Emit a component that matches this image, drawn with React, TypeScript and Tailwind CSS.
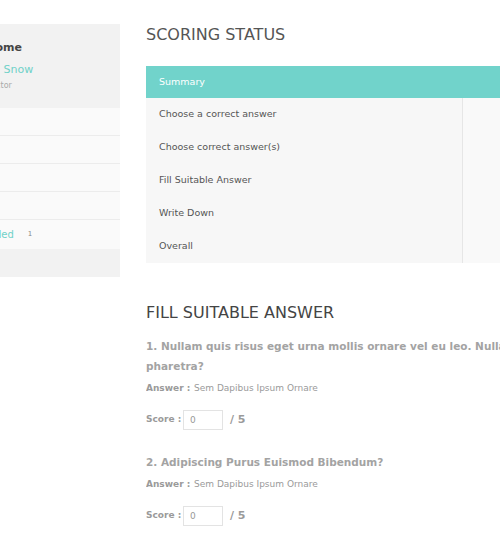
import React from "react";

const FONT = { fontFamily: '"DejaVu Sans", "Liberation Sans", sans-serif' };

const sideRows = ["", "", "", ""];

const summaryRows = [
  "Choose a correct answer",
  "Choose correct answer(s)",
  "Fill Suitable Answer",
  "Write Down",
  "Overall",
];

interface QuestionProps {
  number: number;
  text: string;
  answer: string;
  max: number;
}

function Question({ number, text, answer, max }: QuestionProps) {
  return (
    <div className="mb-[22px]">
      <p className="text-[10.5px] font-bold leading-[20px] text-[#a3a3a3]">{`${number}. ${text}`}</p>
      <div className="mt-[6px] flex items-center text-[9px] leading-[12px] text-[#9a9a9a]">
        <span className="font-bold w-[48px]">Answer :</span>
        <span>{answer}</span>
      </div>
      <div className="mt-[16px] flex items-center text-[9px] text-[#9a9a9a]">
        <span className="font-bold w-[37px]">Score :</span>
        <input
          defaultValue="0"
          className="w-[40px] h-[20px] border border-[#e3e3e3] bg-white px-[6px] text-[9px] text-[#999] outline-none"
        />
        <span className="ml-[7px] text-[11px] font-bold">{`/ ${max}`}</span>
      </div>
    </div>
  );
}

export default function App() {
  return (
    <div className="flex w-[500px] h-[550px] overflow-hidden bg-white pt-6" style={FONT}>
      <aside className="w-[120px] shrink-0 self-start overflow-hidden bg-[#f2f2f2]">
        <div className="ml-[-34px] w-[154px]">
          <div className="h-[84px] pt-[17px]">
            <p className="text-[11px] font-bold text-[#444] leading-[14px]">Welcome</p>
            <p className="mt-[8px] pl-[17px] text-[11px] text-[#6fd1c8] leading-[14px] whitespace-nowrap">Jon Snow</p>
            <p className="mt-[3px] pl-[7px] text-[8px] text-[#aaa] leading-[12px]">Instructor</p>
          </div>
          {sideRows.map((_, i) => (
            <div key={i} className="h-[28px] border-b border-[#ececec] bg-[#fafafa]" />
          ))}
          <div className="flex h-[29px] items-center bg-[#fafafa] pl-[11px] text-[10px]">
            <span className="text-[#6fd1c8]">Graded</span>
            <span className="ml-[14px] text-[7px] text-[#888]">1</span>
          </div>
          <div className="h-[28px]" />
        </div>
      </aside>

      <main className="ml-[26px] min-w-0 flex-1 overflow-hidden">
        <h2 className="mt-[3px] text-[16px] leading-[16px] text-[#555] whitespace-nowrap">
          SCORING STATUS
        </h2>
        <div className="mt-[23px] w-[420px]">
          <div className="flex h-[32px] items-center bg-[#71d3cb] pl-[13px] text-[9.5px] text-white">
            Summary
          </div>
          <div className="flex bg-[#f7f7f7]">
            <div className="w-[317px] border-r border-[#e6e6e6]">
              {summaryRows.map((r) => (
                <div key={r} className="flex h-[33px] items-center pl-[13px] text-[9.5px] text-[#555]">
                  {r}
                </div>
              ))}
            </div>
            <div className="flex-1 bg-[#f9f9f9]" />
          </div>
        </div>

        <h2 className="mt-[42px] text-[16px] leading-[16px] text-[#444] whitespace-nowrap">
          FILL SUITABLE ANSWER
        </h2>
        <div className="mt-[15px] w-[480px]">
          <Question
            number={1}
            text="Nullam quis risus eget urna mollis ornare vel eu leo. Nulla vitae elit libero, a pharetra?"
            answer="Sem Dapibus Ipsum Ornare"
            max={5}
          />
          <Question number={2} text="Adipiscing Purus Euismod Bibendum?" answer="Sem Dapibus Ipsum Ornare" max={5} />
        </div>
      </main>
    </div>
  );
}
